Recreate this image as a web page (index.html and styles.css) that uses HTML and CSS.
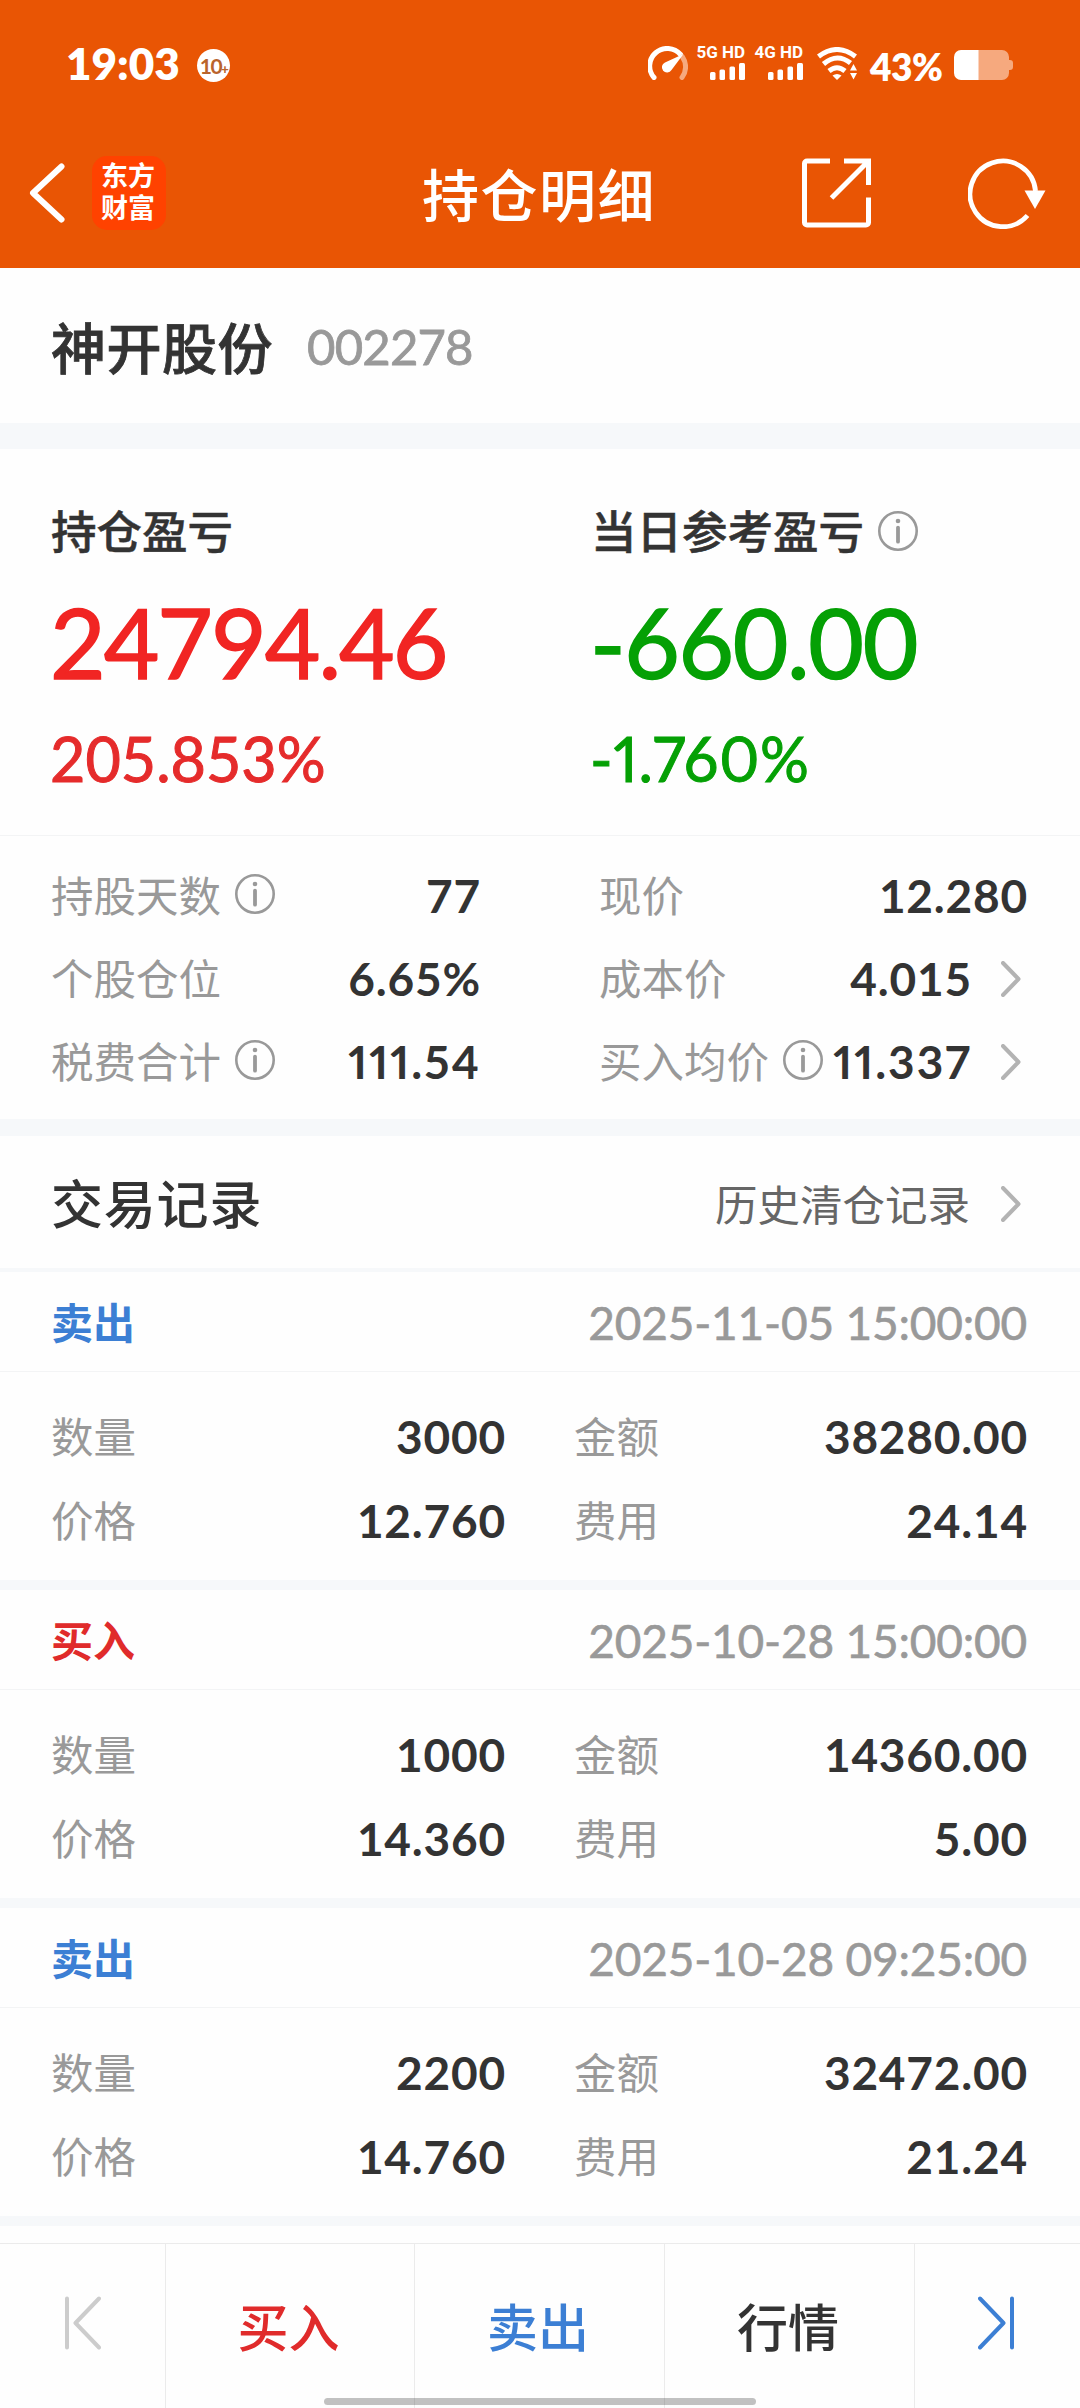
FILE: index.html
```html
<!DOCTYPE html>
<html lang="zh-CN">
<head>
    <meta charset="UTF-8">
    <meta name="viewport" content="width=device-width, initial-scale=1.0">
    <title>持仓明细</title>
    <link rel="stylesheet" href="styles.css">
</head>
<body>
    <!-- Shared icons -->
    <svg class="sprite" aria-hidden="true">
        <symbol id="icon-info" viewBox="0 0 40 40">
            <circle cx="20" cy="20" r="18.7" fill="none" stroke="#999" stroke-width="2.6"/>
            <circle cx="20" cy="10" r="2.3" fill="#999"/>
            <path d="M20 16.7v14" stroke="#999" stroke-width="3.8" stroke-linecap="round"/>
        </symbol>
        <symbol id="icon-arrow" viewBox="0 0 20 36">
            <path d="M2 2l15.500 16L2 34" fill="none" stroke="#b3b3b3" stroke-width="4" stroke-linecap="round" stroke-linejoin="round"/>
        </symbol>
        <symbol id="icon-signal" viewBox="0 0 35 17">
            <rect x="0" y="9" width="5.500" height="8" rx="1.500"/>
            <rect x="9.500" y="6.500" width="5.500" height="10.500" rx="1.500"/>
            <rect x="19.500" y="3.500" width="5.500" height="13.500" rx="1.500"/>
            <rect x="29" y="0" width="6" height="17" rx="1.500"/>
        </symbol>
    </svg>

    <header class="header">
        <div class="status-bar">
            <span class="time">19:03</span>
            <span class="notice">10<i>+</i></span>
            <div class="status-icons">
                <svg class="gauge" viewBox="0 0 40 34">
                    <path d="M6 31.500A17.500 17.500 0 1 1 32.500 8.500" fill="none" stroke="#fff" stroke-width="5" stroke-linecap="round"/>
                    <path d="M34.500 11A17.500 17.500 0 0 1 34 31.500" fill="none" stroke="#f6a97e" stroke-width="5" stroke-linecap="round"/>
                    <path d="M35.500 8L17 16.500A5.200 5.200 0 1 0 23.500 24Z" fill="#fff"/>
                </svg>
                <div class="network">
                    <span>5G HD</span>
                    <svg><use href="#icon-signal"/></svg>
                </div>
                <div class="network">
                    <span>4G HD</span>
                    <svg><use href="#icon-signal"/></svg>
                </div>
                <svg class="wifi" viewBox="0 0 40 33">
                    <g fill="none" stroke="#fff" stroke-width="5">
                        <path d="M1.500 9.500Q20 -4.500 38.500 9.500"/>
                        <path d="M6.500 17Q20 5.500 33.500 16"/>
                        <path d="M12 24Q20 17.500 28 24"/>
                    </g>
                    <path d="M15.500 28.500Q20 25.500 24.500 28.500L20 33ZM36.500 17l3.500 6.500h-7ZM36.500 32.500l3.500-6.500h-7Z" fill="#fff"/>
                </svg>
                <span class="percent">43%</span>
                <svg class="battery" viewBox="0 0 60 30">
                    <path d="M24 0h24a7 7 0 0 1 7 7v3h1a3 3 0 0 1 3 3v4a3 3 0 0 1-3 3h-1v3a7 7 0 0 1-7 7H24Z" fill="#f6a97e"/>
                    <path d="M24.500 0H7a7 7 0 0 0-7 7v16a7 7 0 0 0 7 7h17.500Z" fill="#fff"/>
                </svg>
            </div>
        </div>
        <div class="title-bar">
            <div class="title-left">
                <svg class="back" viewBox="0 0 36 60"><path d="M32.500 3.500L4 30l28.500 26.500" fill="none" stroke="#fff" stroke-width="6" stroke-linecap="round" stroke-linejoin="round"/></svg>
                <div class="app-logo">东方<br>财富</div>
            </div>
            <h1>持仓明细</h1>
            <div class="title-right">
                <svg class="share" viewBox="0 0 69 70" fill="none" stroke="#fff" stroke-width="5">
                    <path d="M28 3H5a2.500 2.500 0 0 0-2.500 2.500V64.500A2.500 2.500 0 0 0 5 67h59a2.500 2.500 0 0 0 2.500-2.500V39.500"/>
                    <path d="M42 3h24.500v24M65 4.500L29.500 40"/>
                </svg>
                <svg class="refresh" viewBox="0 0 78 71">
                    <path d="M59.500 57.500A32.800 32.800 0 1 1 67.500 33" fill="none" stroke="#fff" stroke-width="4.800"/>
                    <path d="M56.500 32.500h21L67 51Z" fill="#fff"/>
                </svg>
            </div>
        </div>
    </header>

    <section class="stock">
        <span class="stock-name">神开股份</span>
        <span class="stock-code">002278</span>
    </section>

    <section class="profit">
        <div class="profit-item red">
            <div class="profit-label">持仓盈亏</div>
            <div class="profit-value">24794.46</div>
            <div class="profit-rate">205.853%</div>
        </div>
        <div class="profit-item green">
            <div class="profit-label">当日参考盈亏<svg class="info"><use href="#icon-info"/></svg></div>
            <div class="profit-value">-660.00</div>
            <div class="profit-rate narrow">-1.760%</div>
        </div>
    </section>

    <section class="detail">
        <div class="detail-col">
            <div class="row"><span class="label">持股天数</span><svg class="info"><use href="#icon-info"/></svg><span class="value">77</span></div>
            <div class="row"><span class="label">个股仓位</span><span class="value">6.65%</span></div>
            <div class="row"><span class="label">税费合计</span><svg class="info"><use href="#icon-info"/></svg><span class="value narrow">111.54</span></div>
        </div>
        <div class="detail-col">
            <div class="row"><span class="label">现价</span><span class="value">12.280</span></div>
            <div class="row"><span class="label">成本价</span><span class="value">4.015</span><svg class="arrow"><use href="#icon-arrow"/></svg></div>
            <div class="row"><span class="label">买入均价</span><svg class="info"><use href="#icon-info"/></svg><span class="value narrow">11.337</span><svg class="arrow"><use href="#icon-arrow"/></svg></div>
        </div>
    </section>

    <section class="records">
        <div class="records-header">
            <h2>交易记录</h2>
            <span class="history">历史清仓记录</span>
            <svg class="arrow"><use href="#icon-arrow"/></svg>
        </div>

        <div class="record">
            <div class="record-top"><span class="side sell">卖出</span><span class="date">2025-11-05 15:00:00</span></div>
            <div class="record-body">
                <div class="cell"><span class="label">数量</span><span class="value">3000</span></div>
                <div class="cell"><span class="label">金额</span><span class="value">38280.00</span></div>
                <div class="cell"><span class="label">价格</span><span class="value">12.760</span></div>
                <div class="cell"><span class="label">费用</span><span class="value">24.14</span></div>
            </div>
        </div>

        <div class="record">
            <div class="record-top"><span class="side buy">买入</span><span class="date">2025-10-28 15:00:00</span></div>
            <div class="record-body">
                <div class="cell"><span class="label">数量</span><span class="value">1000</span></div>
                <div class="cell"><span class="label">金额</span><span class="value">14360.00</span></div>
                <div class="cell"><span class="label">价格</span><span class="value">14.360</span></div>
                <div class="cell"><span class="label">费用</span><span class="value">5.00</span></div>
            </div>
        </div>

        <div class="record">
            <div class="record-top"><span class="side sell">卖出</span><span class="date">2025-10-28 09:25:00</span></div>
            <div class="record-body">
                <div class="cell"><span class="label">数量</span><span class="value">2200</span></div>
                <div class="cell"><span class="label">金额</span><span class="value">32472.00</span></div>
                <div class="cell"><span class="label">价格</span><span class="value">14.760</span></div>
                <div class="cell"><span class="label">费用</span><span class="value">21.24</span></div>
            </div>
        </div>
    </section>

    <nav class="bottom-bar">
        <div class="tab"><svg class="step" viewBox="0 0 36 54"><path d="M2 2.500v49M34 2.500L10.500 27 34 51.500" stroke="#ccc"/></svg></div>
        <div class="tab buy">买入</div>
        <div class="tab sell">卖出</div>
        <div class="tab">行情</div>
        <div class="tab"><svg class="step" viewBox="0 0 36 54"><path d="M34 2.500v49M2 2.500L25.500 27 2 51.500" stroke="#3c7fd4"/></svg></div>
        <div class="home-indicator"></div>
    </nav>
</body>
</html>
```
FILE: styles.css
```css
* {
    box-sizing: border-box;
}

body {
    margin: 0;
    width: 1080px;
    height: 2408px;
    overflow: hidden;
    display: flex;
    flex-direction: column;
    background-color: #fefefe;
    color: #333;
    font-family: Lato, "Noto Sans CJK SC", sans-serif;
    font-variant-numeric: tabular-nums;
    white-space: nowrap;
}

svg {
    display: block;
    flex: none;
}

.sprite {
    position: absolute;
    width: 0;
    height: 0;
}

/* Header */
.header {
    height: 268px;
    flex: none;
    background-color: #e95504;
    color: #fff;
}

.status-bar {
    height: 126px;
    padding: 0 66px 0 66px;
    display: flex;
    align-items: center;
}

.time {
    width: 114px;
    font-size: 44px;
    font-weight: 800;
}

.notice {
    width: 33px;
    height: 33px;
    margin: 4px 0 0 17px;
    border-radius: 50%;
    background-color: #fff;
    color: #b9642c;
    font-size: 21px;
    font-weight: 700;
    line-height: 33px;
    letter-spacing: -1.5px;
    display: flex;
    justify-content: center;
}

.notice i {
    font-size: 13px;
    font-style: normal;
    font-weight: 900;
    line-height: 40px;
}

.status-icons {
    margin-left: auto;
    display: flex;
    align-items: flex-end;
    height: 34px;
}

.gauge {
    width: 40px;
    height: 34px;
}

.network {
    width: 47px;
    margin-left: 10px;
    display: flex;
    flex-direction: column;
    align-items: flex-end;
    gap: 4px;
}

.network + .network {
    margin-left: 11px;
}

.network span {
    font-family: Roboto, sans-serif;
    font-size: 17px;
    font-weight: 700;
    line-height: 13px;
}

.network svg {
    width: 35px;
    height: 17px;
    fill: #fff;
}

.wifi {
    width: 40px;
    height: 33px;
    margin-left: 14px;
}

.percent {
    margin-left: 13px;
    width: 73px;
    font-size: 37px;
    font-weight: 800;
    line-height: 26px;
    letter-spacing: -0.5px;
}

.battery {
    width: 60px;
    height: 30px;
    margin-left: 11px;
}

.title-bar {
    height: 142px;
    padding: 0 34px 8px 29px;
    display: grid;
    grid-template-columns: 1fr auto 1fr;
    align-items: center;
}

.title-left,
.title-right {
    display: flex;
    align-items: center;
}

.title-right {
    justify-content: flex-end;
    gap: 97px;
}

.back {
    width: 36px;
    height: 60px;
}

.app-logo {
    width: 74px;
    height: 74px;
    margin-left: 27px;
    border-radius: 15px;
    background-color: #ff4200;
    font-size: 27px;
    font-weight: 700;
    line-height: 32px;
    padding: 4px 0 0 9px;
}

h1 {
    margin: 0;
    padding: 3px 0 0 3px;
    font-size: 57px;
    font-weight: 500;
    letter-spacing: 1.5px;
    line-height: 60px;
}

.share {
    width: 69px;
    height: 70px;
}

.refresh {
    width: 78px;
    height: 71px;
}

/* Stock name */
.stock {
    height: 181px;
    flex: none;
    padding: 0 51px;
    display: flex;
    align-items: center;
    border-bottom: 26px solid #f6f8fa;
}

.stock-name {
    padding-bottom: 2px;
    font-size: 55px;
    font-weight: 500;
    letter-spacing: 0.5px;
    -webkit-text-stroke: 0.8px;
}

.stock-code {
    margin-left: 34px;
    color: #999;
    font-size: 49px;
    letter-spacing: -0.8px;
    -webkit-text-stroke: 0.8px;
}

/* Profit */
.profit {
    height: 387px;
    flex: none;
    padding: 53px 0 0 51px;
    display: grid;
    grid-template-columns: 540px 1fr;
    border-bottom: 1px solid #f3f4f5;
}

.profit-label {
    display: flex;
    align-items: center;
    font-size: 45.5px;
    font-weight: 500;
    line-height: 60px;
    -webkit-text-stroke: 0.5px;
}

.info {
    width: 40px;
    height: 40px;
    margin: 0 0 3px 14px;
}

.profit-value {
    margin-top: 25px;
    margin-left: -1px;
    font-size: 96px;
    line-height: 110px;
    letter-spacing: -2px;
    -webkit-text-stroke: 1.5px;
}

.green .profit-value {
    letter-spacing: -1.4px;
}

.profit-rate {
    margin-top: 27px;
    margin-left: -1px;
    font-size: 61px;
    line-height: 70px;
    -webkit-text-stroke: 1px;
}

.profit-rate.narrow {
    font-variant-numeric: proportional-nums;
    letter-spacing: 0.8px;
}

.red .profit-value {
    color: #f12523;
}

.red .profit-rate {
    color: #e52b2b;
}

.green .profit-value,
.green .profit-rate {
    color: #05a005;
}

/* Holding details */
.detail {
    height: 300px;
    flex: none;
    padding: 18px 52px 0 51px;
    display: grid;
    grid-template-columns: 430px 429px;
    justify-content: space-between;
    border-bottom: 17px solid #f6f8fa;
}

.row {
    height: 83px;
    display: flex;
    align-items: center;
}

.label {
    padding-bottom: 4px;
    color: #999;
    font-size: 42.5px;
}

.value {
    margin-left: auto;
    font-size: 46px;
    font-weight: 700;
    letter-spacing: 0.8px;
}

.value.narrow {
    font-variant-numeric: proportional-nums;
    letter-spacing: 2px;
}

.row .arrow {
    margin: 0 7px 0 29px;
}

.arrow {
    width: 20px;
    height: 36px;
}

/* Trade records */
.records-header {
    height: 136px;
    padding: 0 59px 0 51px;
    display: flex;
    align-items: center;
    border-bottom: 4px solid #f6f8fa;
}

.records-header .arrow {
    margin-top: 3px;
}

h2 {
    margin: 0;
    padding-bottom: 2px;
    font-size: 52px;
    font-weight: 500;
    letter-spacing: 0.8px;
}

.history {
    margin: 0 31px 0 auto;
    color: #666;
    font-size: 42.5px;
}

.record {
    height: 318px;
    border-bottom: 10px solid #f6f8fa;
}

.record-top {
    height: 100px;
    padding: 0 53px 0 51px;
    display: flex;
    align-items: center;
    justify-content: space-between;
    border-bottom: 1px solid #f3f4f5;
}

.side {
    padding-bottom: 2px;
    font-size: 42px;
    font-weight: 700;
}

.date {
    padding-top: 1px;
    color: #999;
    font-size: 46px;
    letter-spacing: -0.2px;
    -webkit-text-stroke: 0.6px;
}

.record-body {
    padding: 22px 52px 0 51px;
    display: grid;
    grid-template-columns: 455px 454px;
    justify-content: space-between;
}

.cell {
    height: 84px;
    display: flex;
    align-items: center;
}

.buy {
    color: #e02b2b;
}

.sell {
    color: #3c7fd4;
}

/* Bottom bar */
.bottom-bar {
    position: absolute;
    top: 2243px;
    left: 0;
    width: 1080px;
    height: 165px;
    display: grid;
    grid-template-columns: 166px 249px 250px 250px 165px;
    border-top: 1px solid #ebebeb;
    background-color: #fefefe;
}

.tab {
    display: flex;
    align-items: center;
    justify-content: center;
    padding: 0 3px 2px 0;
    font-size: 51px;
    font-weight: 500;
    border-right: 1px solid #ebebeb;
}

.tab:first-child {
    padding-right: 0;
}

.tab:nth-child(5) {
    border-right: none;
}

.step {
    width: 36px;
    height: 54px;
    margin-bottom: 4px;
    fill: none;
    stroke-width: 4;
    stroke-linecap: round;
    stroke-linejoin: round;
}

.home-indicator {
    position: absolute;
    left: 324px;
    bottom: 3px;
    width: 432px;
    height: 7px;
    border-radius: 4px;
    background-color: rgba(0, 0, 0, 0.24);
}
```
